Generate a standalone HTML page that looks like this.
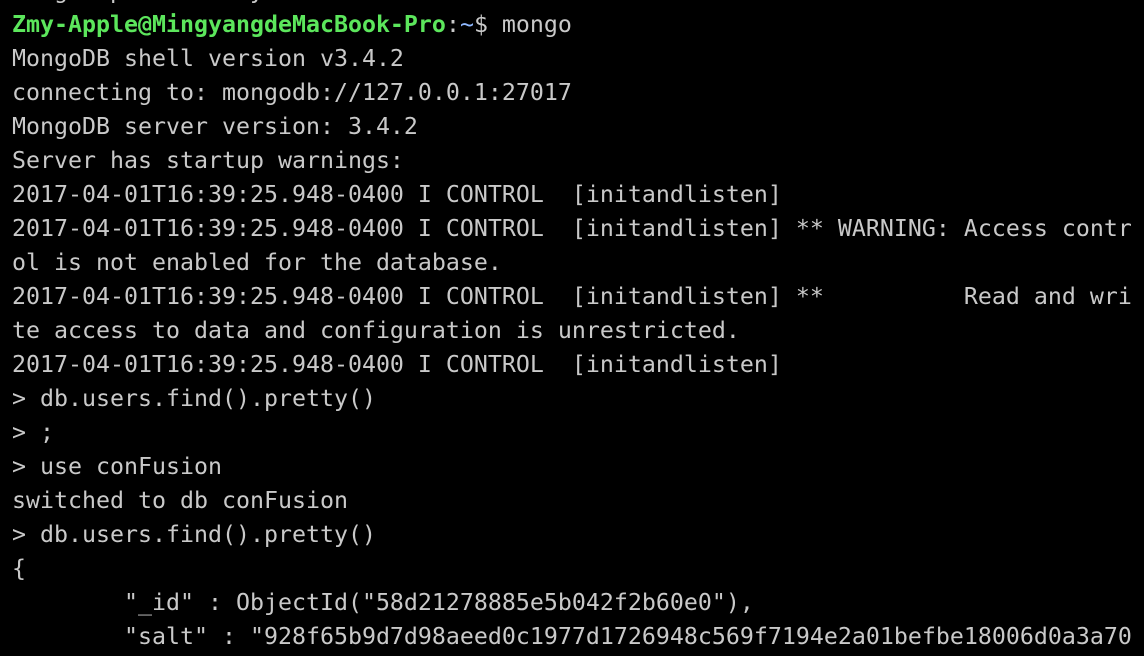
<html><head><style>
body{margin:0;background:#000;width:1144px;height:656px;overflow:hidden}
pre{margin:0;position:absolute;left:12px;top:-26px;font-family:"DejaVu Sans Mono","Liberation Mono",monospace;font-size:23.25px;line-height:34px;color:#c9c9c9;white-space:pre}
.g{color:#5ce65c;font-weight:bold}.b{color:#8fb8ff}
</style></head><body><pre>   g   p         y
<span class="g">Zmy-Apple@MingyangdeMacBook-Pro</span>:<span class="b">~</span>$ mongo
MongoDB shell version v3.4.2
connecting to: mongodb://127.0.0.1:27017
MongoDB server version: 3.4.2
Server has startup warnings:
2017-04-01T16:39:25.948-0400 I CONTROL  [initandlisten]
2017-04-01T16:39:25.948-0400 I CONTROL  [initandlisten] ** WARNING: Access contr
ol is not enabled for the database.
2017-04-01T16:39:25.948-0400 I CONTROL  [initandlisten] **          Read and wri
te access to data and configuration is unrestricted.
2017-04-01T16:39:25.948-0400 I CONTROL  [initandlisten]
&gt; db.users.find().pretty()
&gt; ;
&gt; use conFusion
switched to db conFusion
&gt; db.users.find().pretty()
{
        "_id" : ObjectId("58d21278885e5b042f2b60e0"),
        "salt" : "928f65b9d7d98aeed0c1977d1726948c569f7194e2a01befbe18006d0a3a70
</pre></body></html>
